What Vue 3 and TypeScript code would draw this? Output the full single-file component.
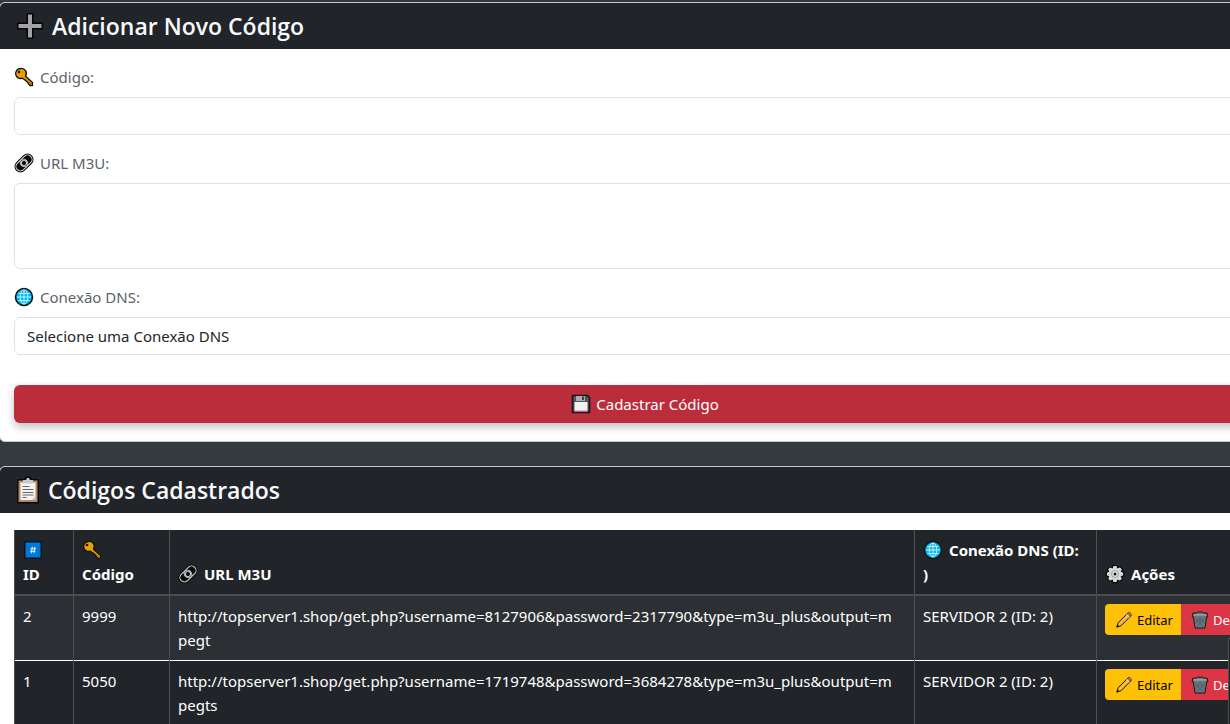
<script setup lang="ts">
import { ref } from 'vue'

interface Entry {
  id: number
  code: string
  url: string
  server: string
}

const code = ref('')
const url = ref('')
const dns = ref('')
const entries: Entry[] = [
  { id: 2, code: '9999', url: 'http://topserver1.shop/get.php?username=8127906&password=2317790&type=m3u_plus&output=mpegt', server: 'SERVIDOR 2 (ID: 2)' },
  { id: 1, code: '5050', url: 'http://topserver1.shop/get.php?username=1719748&password=3684278&type=m3u_plus&output=mpegts', server: 'SERVIDOR 2 (ID: 2)' },
]
</script>

<template>
  <svg class="defs" aria-hidden="true">
    <symbol id="plus" viewBox="0 0 28 28">
      <path d="M10.500 1h7v9.500h9.500v7h-9.500v9.500h-7v-9.500h-9.500v-7h9.500z" fill="#050505" />
      <path d="M12 2.500h4v9.500h9.500v4h-9.500v9.500h-4v-9.500h-9.500v-4h9.500z" fill="#a3a3a3" />
    </symbol>
    <symbol id="key" viewBox="0 0 20 20">
      <path d="M6.500 1.500a5 5 0 1 0 1.800 9.700l2 1.300 1.500 1.200 1.700 1.500 1 1.800 1.500 1.500h2.500v-3l-7-6.300a5 5 0 0 0-5-7.700z" fill="#e9a100" stroke="#111" stroke-width="1.300" stroke-linejoin="round" />
      <circle cx="5" cy="5" r="1.300" fill="#111" />
      <path d="M11 12l6 5" stroke="#875900" stroke-width="1" />
    </symbol>
    <symbol id="chain" viewBox="0 0 20 20">
      <g transform="rotate(-45 10 10)" fill="none">
        <rect x="-1" y="4" width="22" height="12" rx="6" fill="#0a0a0a" />
        <rect x=".5" y="5.500" width="13" height="9" rx="4.500" stroke="#d0d0d0" stroke-width="1.100" />
        <rect x="6.500" y="5.500" width="13" height="9" rx="4.500" stroke="#d0d0d0" stroke-width="1.100" />
        <circle cx="10" cy="10" r="2.600" stroke="#d0d0d0" stroke-width="1.100" />
      </g>
    </symbol>
    <symbol id="globe" viewBox="0 0 20 20">
      <circle cx="10" cy="10" r="8.500" fill="#00b7f0" stroke="#111" stroke-width="1.500" />
      <g fill="none" stroke="#c4f0ff" stroke-width="1">
        <path d="M10 3v14M3 10h14M4.500 6.500h11M4.500 13.500h11" />
        <ellipse cx="10" cy="10" rx="3.800" ry="7" />
      </g>
    </symbol>
    <symbol id="disk" viewBox="0 0 20 20">
      <path d="M1.500 1.500h15l2 2v15h-17z" fill="#555" stroke="#17171b" stroke-width="1.600" />
      <path d="M5 2h9v5H5z" fill="#a9adb0" />
      <path d="M11 2.500h2v3.500h-2z" fill="#444" />
      <path d="M3.500 8h13v9h-13z" fill="#f3f3f3" />
      <path d="M3.500 16.500h13v1.300h-13z" fill="#e36b9b" />
    </symbol>
    <symbol id="clipboard" viewBox="0 0 24 28">
      <path d="M1 3h7l2-2.500h4l2 2.500h7v24.500H1z" fill="#080808" />
      <path d="M2.500 4.500h19v21.500h-19z" fill="#b78761" />
      <path d="M4.500 6.500h15v17.500h-15z" fill="#f3f3f3" />
      <path d="M16 24l3.500-3.500V24z" fill="#b9b9b9" />
      <path d="M7 4h3l1-2h2l1 2h3v3.500H7z" fill="#c9c9c9" />
      <path d="M6.500 10.500h7M6.500 13.500h11M6.500 16.500h11M6.500 19h11M6.500 21.500h4" stroke="#666" stroke-width="1" />
    </symbol>
    <symbol id="hash" viewBox="0 0 20 20">
      <rect x="1" y="1" width="18" height="18" rx="1" fill="#0a1420" />
      <path d="M2.500 2.500h15v15h-15z" fill="#0078d7" />
      <path d="M9.300 6.800l-1 6.500M11.800 6.800l-1 6.500M7.500 8.800h5.500M7 11.300h5.500" stroke="#fff" stroke-width=".9" />
    </symbol>
    <symbol id="gear" viewBox="0 0 20 20">
      <path d="M8 1.500h4l.7 2.200 2.300-1 2.500 2.500-1 2.300 2.200.7v3.600l-2.200.7 1 2.300-2.500 2.600-2.300-1-.7 2.200H8l-.7-2.200-2.300 1-2.500-2.600 1-2.300-2.200-.7V8.200l2.200-.7-1-2.300L5 2.700l2.300 1z" fill="#d8d8d8" stroke="#080808" stroke-width="1.200" />
      <circle cx="10" cy="10" r="3.400" fill="#eee" stroke="#888" stroke-width=".8" />
      <circle cx="10" cy="10" r="1.500" fill="#111" />
    </symbol>
    <symbol id="pencil" viewBox="0 0 20 20">
      <path d="M2 18l1.400-4.800L14.300 2.300c1.300-1.100 4.300 1.700 3.200 3.200L6.800 16.300z" fill="#f4bd35" stroke="#111" stroke-width="1.100" stroke-linejoin="round" />
      <path d="M14 2.600l1-.8c1.500-.8 4 1.700 2.800 3.200l-.8 1z" fill="#e86a8b" stroke="#111" stroke-width=".6" />
      <path d="M12.800 4l3 3" stroke="#ddd" stroke-width="1.200" />
      <path d="M2 18l.8-3 2.200 2.200z" fill="#111" />
    </symbol>
    <symbol id="trash" viewBox="0 0 20 20">
      <path d="M7 1.200h6l1 1.200h4l.8 4h-1.400L15.500 19h-11L2.600 6.400H1.200l.8-4h4z" fill="#66757c" stroke="#17191b" stroke-width="1.100" stroke-linejoin="round" />
      <path d="M3 4.300h14" stroke="#9aa7ad" stroke-width="1.600" />
      <path d="M5 8l8 9M9 8l6 6M15 8l-8 9M11 8l-6 6" stroke="#46535a" stroke-width=".8" />
    </symbol>
  </svg>

  <main class="page">
    <section class="card">
      <h4 class="card-header"><svg class="icon-lg"><use href="#plus" /></svg>Adicionar Novo Código</h4>
      <form class="card-body" @submit.prevent>
        <div class="field">
          <label for="code"><svg class="icon-md"><use href="#key" /></svg>Código:</label>
          <input id="code" v-model="code" class="control" type="text">
        </div>
        <div class="field">
          <label for="url"><svg class="icon-md"><use href="#chain" /></svg>URL M3U:</label>
          <textarea id="url" v-model="url" class="control" rows="3"></textarea>
        </div>
        <div class="field">
          <label for="dns"><svg class="icon-md"><use href="#globe" /></svg>Conexão DNS:</label>
          <select id="dns" v-model="dns" class="control">
            <option value="">Selecione uma Conexão DNS</option>
            <option value="2">SERVIDOR 2</option>
          </select>
        </div>
        <button class="submit" type="submit"><svg class="icon-md"><use href="#disk" /></svg>Cadastrar Código</button>
      </form>
    </section>

    <section class="card">
      <h4 class="card-header"><svg class="icon-lg icon-narrow"><use href="#clipboard" /></svg>Códigos Cadastrados</h4>
      <div class="card-body">
        <table class="codes">
          <colgroup><col class="c-id"><col class="c-code"><col class="c-url"><col class="c-dns"><col class="c-actions"></colgroup>
          <thead>
            <tr>
              <th scope="col"><svg class="icon-md"><use href="#hash" /></svg><br>ID</th>
              <th scope="col"><svg class="icon-md"><use href="#key" /></svg><br>Código</th>
              <th scope="col"><svg class="icon-md"><use href="#chain" /></svg>URL M3U</th>
              <th scope="col"><svg class="icon-md"><use href="#globe" /></svg>Conexão DNS (ID:<br>)</th>
              <th scope="col"><svg class="icon-md"><use href="#gear" /></svg>Ações</th>
            </tr>
          </thead>
          <tbody>
            <tr v-for="entry in entries" :key="entry.id">
              <td>{{ entry.id }}</td>
              <td>{{ entry.code }}</td>
              <td class="url">{{ entry.url }}</td>
              <td>{{ entry.server }}</td>
              <td>
                <div class="actions">
                  <button class="edit" type="button"><svg class="icon-sm"><use href="#pencil" /></svg>Editar</button>
                  <button class="delete" type="button"><svg class="icon-sm"><use href="#trash" /></svg>Deletar</button>
                </div>
              </td>
            </tr>
          </tbody>
        </table>
      </div>
    </section>
  </main>
  <div class="edge-panel" aria-hidden="true"></div>
</template>

<style>
html, body { margin: 0; background: #343a40; }
body { overflow: hidden; }
</style>

<style scoped>
* { box-sizing: border-box; }
.defs { position: absolute; width: 0; height: 0; }
.page {
  display: flex;
  flex-direction: column;
  gap: 24px;
  width: calc(100% + 62px);
  margin-left: -1px;
  padding-top: 2px;
  font: 15px/24px "Segoe UI", "Noto Sans", "Open Sans", sans-serif;
  color: #212529;
  background: #343a40;
}
.card { border: 1px solid #c8c9ca; border-radius: 6px; background: #fff; overflow: hidden; }
.card-header {
  display: flex;
  align-items: center;
  gap: 8px;
  height: 46px;
  margin: 0;
  padding: 0 16px;
  background: #212529;
  color: #f8f9fa;
  font-family: "Segoe UI", "Open Sans", sans-serif;
  font-size: 23px;
  font-weight: 600;
}
.icon-lg { width: 28px; height: 28px; flex: none; }
.icon-narrow { width: 24px; }
.icon-md { width: 20px; height: 20px; flex: none; vertical-align: -4px; }
.icon-sm { width: 18px; height: 18px; flex: none; }
.card-body { padding: 16px 14px 18px; }
.field { margin-bottom: 16px; }
.field label { display: flex; align-items: center; gap: 6px; margin-bottom: 8px; color: #5c636a; }
.control {
  display: block;
  width: 100%;
  height: 38px;
  padding: 6px 12px;
  border: 1px solid #dee2e6;
  border-radius: 6px;
  background: #fff;
  color: #212529;
  font: inherit;
  appearance: none;
  resize: none;
}
textarea.control { height: 86px; }
.submit {
  display: flex;
  align-items: center;
  justify-content: center;
  gap: 5px;
  width: 100%;
  height: 38px;
  margin-top: 30px;
  border: 0;
  border-radius: 6px;
  background: #bb2d3b;
  color: #fff;
  font: inherit;
  box-shadow: 0 4px 8px rgba(0, 0, 0, 0.25);
}
.codes { width: 100%; margin-top: 1px; table-layout: fixed; border-collapse: collapse; background: #212529; color: #fff; }
.c-id { width: 59px; }
.c-code { width: 96px; }
.c-url { width: 745px; }
.c-dns { width: 182px; }
.codes th, .codes td { padding: 8px; border: 1px solid #4d5154; border-width: 0 1px; text-align: left; }
.codes th { vertical-align: bottom; font-weight: 700; }
.codes th .icon-md { margin-right: 6px; }
.codes thead { border-bottom: 2px solid #4d4d4d; }
.codes td { vertical-align: top; }
.codes tbody tr { border-bottom: 1px solid #fff; }
.codes tbody tr:last-child { border-bottom-color: #4d5154; }
.codes tbody tr:nth-child(odd) { background: #2c3034; }
.codes .url { padding-right: 16px; word-break: break-all; }
.actions { display: flex; }
.actions button {
  display: flex;
  align-items: center;
  gap: 4px;
  height: 31px;
  padding: 0 8px 0 10px;
  border: 0;
  font: inherit;
  font-size: 13px;
  white-space: nowrap;
}
.edit { border-radius: 4px 0 0 4px; background: #ffc107; color: #000; }
.actions .delete { border-radius: 0 4px 4px 0; background: #dc3545; color: #fff; }
.edge-panel {
  position: fixed;
  right: 0;
  bottom: 0;
  width: 2px;
  height: 86px;
  border: 1px solid #4d4d4d;
  border-width: 1px 0 0 1px;
  background: #212529;
}
</style>
